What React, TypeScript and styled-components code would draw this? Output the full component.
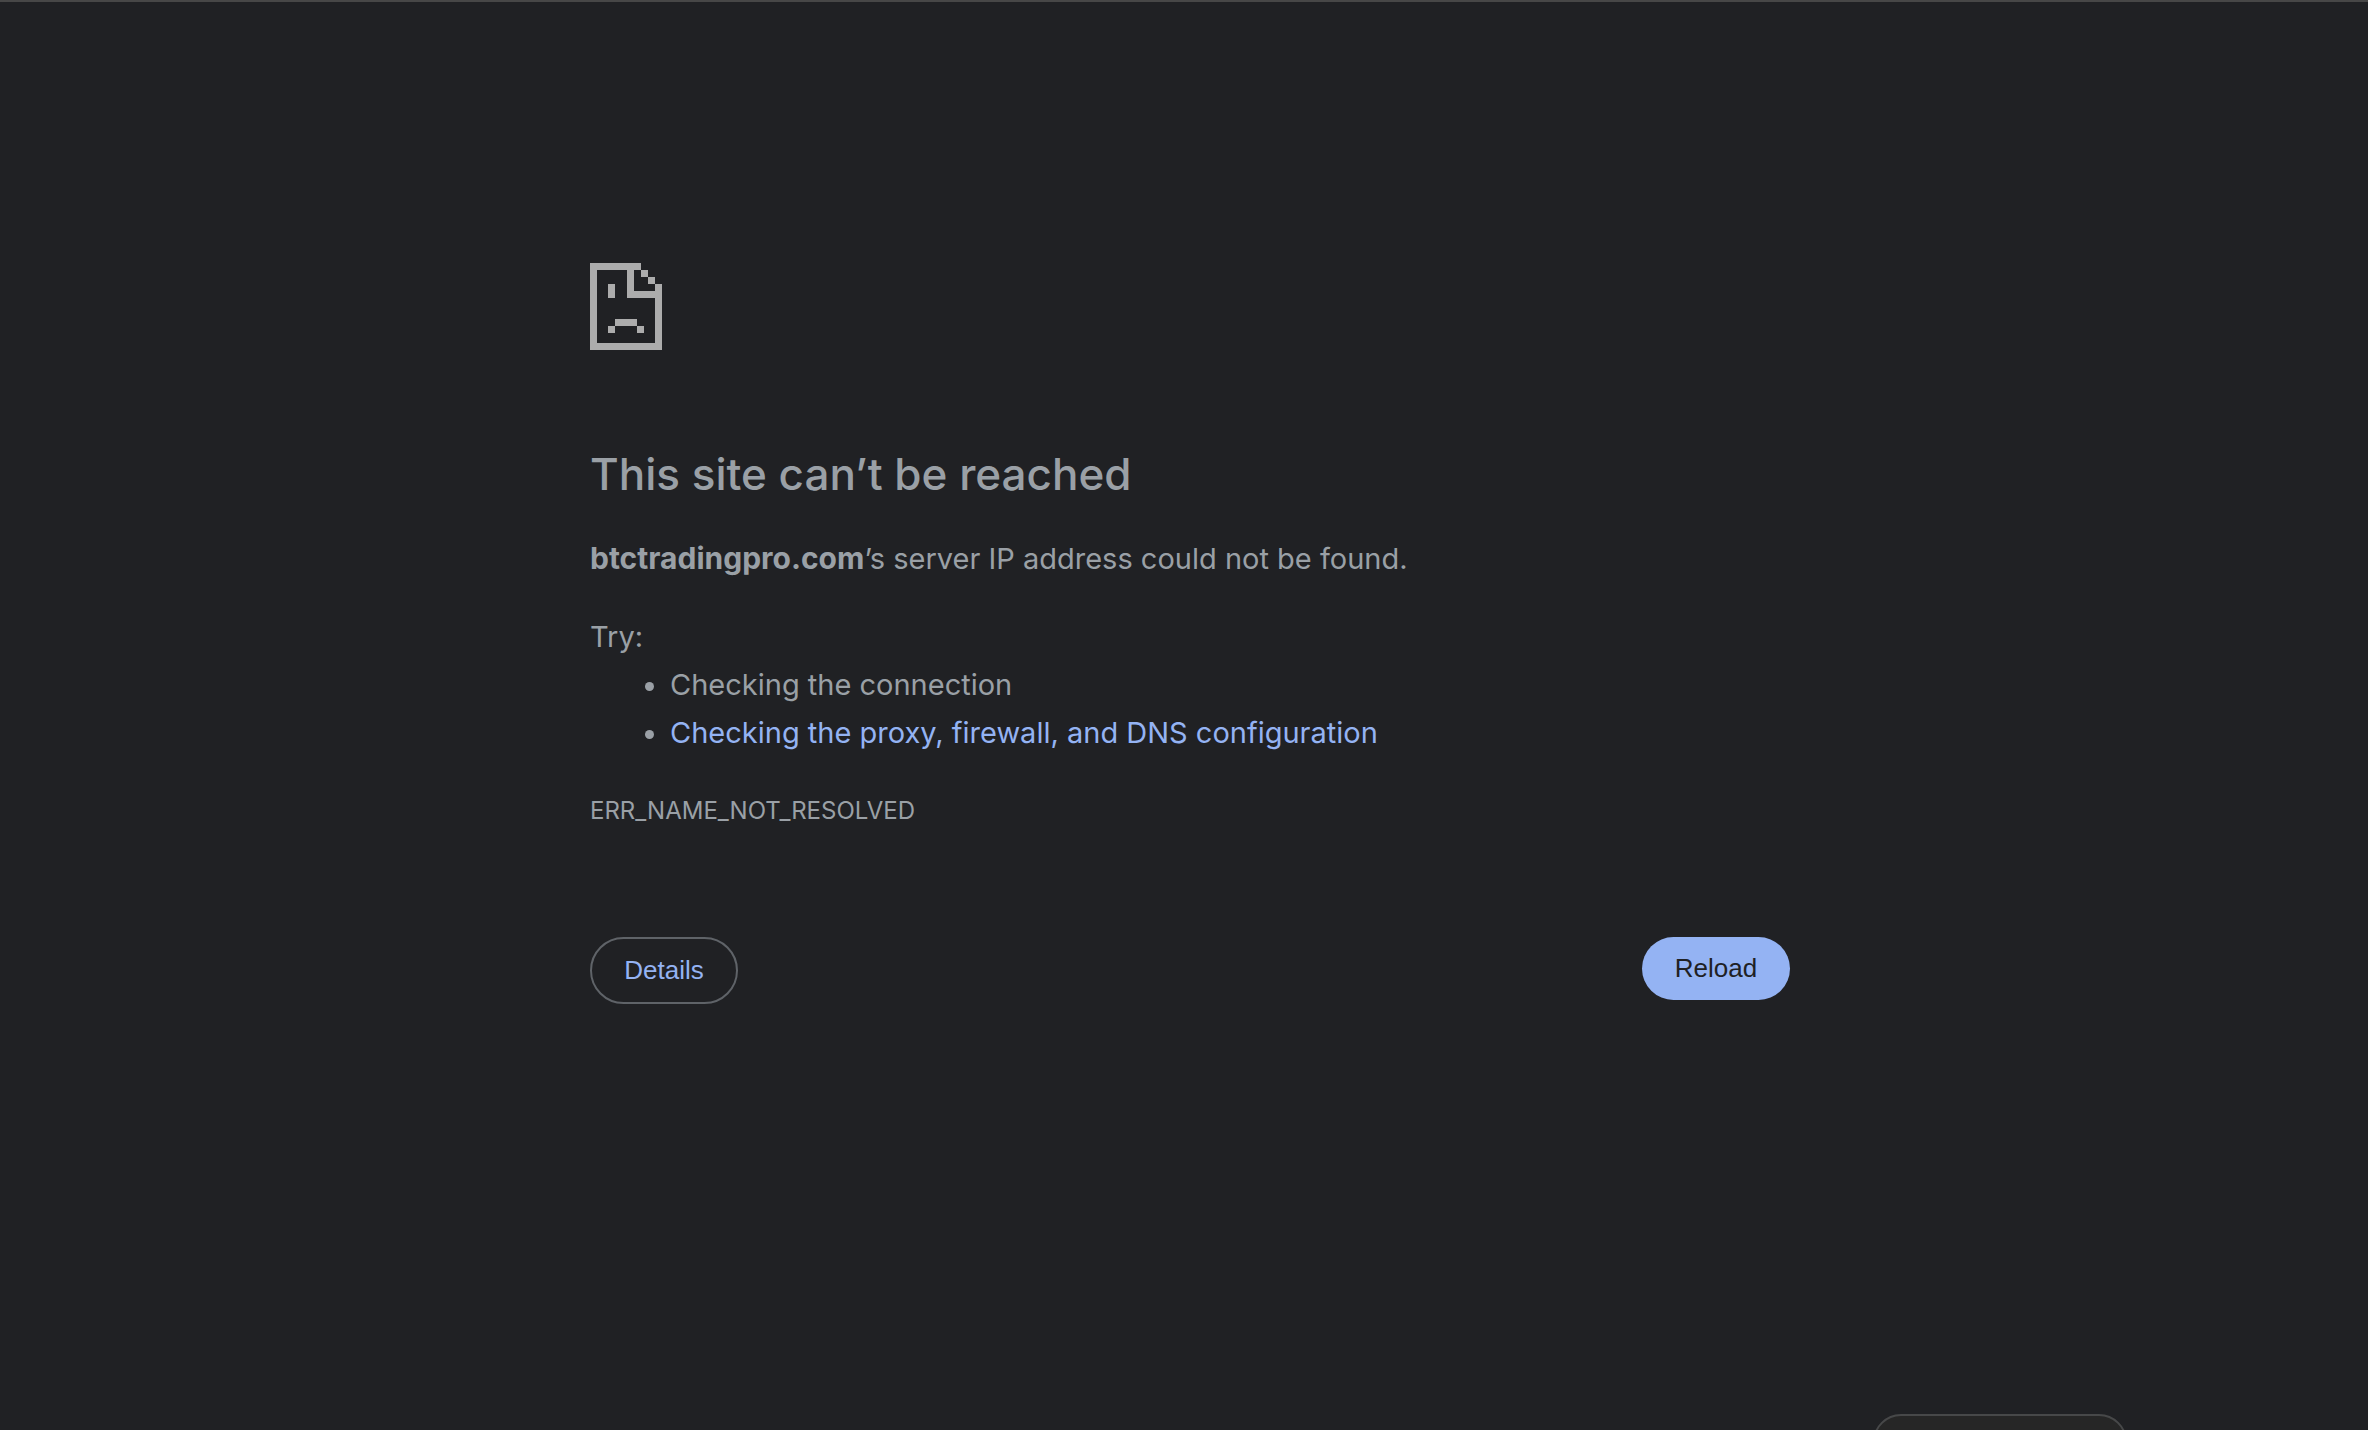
import React from "react";
import styled, { createGlobalStyle } from "styled-components";

const GlobalStyle = createGlobalStyle`
  *, *::before, *::after { box-sizing: border-box; }
  body {
    margin: 0;
    background: #202124;
    color: #9aa0a6;
    font-family: Inter, "Liberation Sans", sans-serif;
    font-size: 29px;
    line-height: 48px;
  }
`;

const Page = styled.div`
  position: relative;
  min-height: 100vh;
  overflow: hidden;
  border-top: 2px solid #474747;
  padding-left: 12px;
`;

const Interstitial = styled.main`
  width: 100%;
  max-width: 1200px;
  margin: 0 auto;
  padding-top: 261px;
`;

const ErrorIcon = styled.svg`
  display: block;
  width: 72px;
  height: 87px;
  fill: #acacac;
`;

const Title = styled.h1`
  margin: 96px 0 32px;
  font-size: 44px;
  font-weight: 500;
  line-height: 56px;
`;

const Paragraph = styled.p`
  margin: 0;
`;

const HostName = styled.strong`
  font-size: 30px;
  font-weight: 700;
`;

const Suggestions = styled.section`
  margin-top: 30px;
`;

const SuggestionList = styled.ul`
  margin: 0;
  padding-left: 80px;
`;

const Link = styled.a`
  color: #94b3f3;
  text-decoration: none;
`;

const ErrorCode = styled.p`
  margin: 32px 0 0;
  font-size: 24px;
  line-height: 44px;
`;

const Actions = styled.div`
  display: flex;
  align-items: flex-start;
  justify-content: space-between;
  margin-top: 104px;
`;

const Button = styled.button<{ $primary?: boolean }>`
  min-width: 148px;
  height: ${(p) => (p.$primary ? 63 : 67)}px;
  padding: 0 32px;
  border: ${(p) => (p.$primary ? "0" : "2px solid #5f6368")};
  border-radius: 34px;
  background: ${(p) => (p.$primary ? "#94b3f3" : "transparent")};
  color: ${(p) => (p.$primary ? "#202124" : "#94b3f3")};
  font-family: "Liberation Sans", Arial, sans-serif;
  font-size: 26px;
  cursor: pointer;
`;

const Toast = styled.div`
  position: absolute;
  top: 1412px;
  right: 241px;
  width: 254px;
  height: 64px;
  border: 2px solid #474849;
  border-radius: 28px;
  background: #262626;
`;

export default function App() {
  return (
    <Page>
      <GlobalStyle />
      <Interstitial>
        <ErrorIcon viewBox="0 0 72 87" shapeRendering="crispEdges" aria-hidden="true">
          <path d="M0 0H51V7H44V28H65V21H72V87H0ZM7 7V80H65V35H37V7Z" fillRule="evenodd" />
          <path d="M51 7h7v7h-7zM58 14h7v7h-7zM18 21h7v14h-7zM25 56h22v7h-22zM18 63h7v7h-7zM47 63h7v7h-7z" />
        </ErrorIcon>
        <Title>This site can’t be reached</Title>
        <Paragraph>
          <HostName>btctradingpro.com</HostName>’s server IP address could not be found.
        </Paragraph>
        <Suggestions>
          <Paragraph>Try:</Paragraph>
          <SuggestionList>
            <li>Checking the connection</li>
            <li>
              <Link href="#buttons">Checking the proxy, firewall, and DNS configuration</Link>
            </li>
          </SuggestionList>
        </Suggestions>
        <ErrorCode>ERR_NAME_NOT_RESOLVED</ErrorCode>
        <Actions id="buttons">
          <Button type="button">Details</Button>
          <Button type="button" $primary>
            Reload
          </Button>
        </Actions>
      </Interstitial>
      <Toast />
    </Page>
  );
}
